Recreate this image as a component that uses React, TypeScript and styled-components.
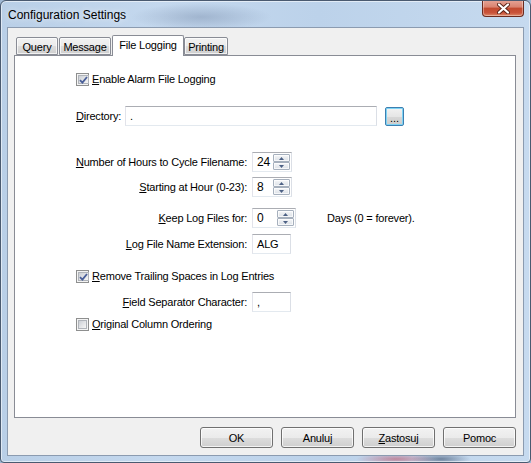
import React from "react";
import styled, { createGlobalStyle } from "styled-components";

const Global = createGlobalStyle`
  html, body { margin: 0; padding: 0; background: #9fb8d4; }
  body { font-family: "Liberation Sans", Arial, sans-serif; font-size: 11px; color: #000; }
  * { box-sizing: border-box; }
`;

const Window = styled.div`
  width: 531px;
  height: 463px;
  border: 1px solid #4a5a70;
  border-radius: 6px 6px 4px 4px;
  overflow: hidden;
  display: flex;
  flex-direction: column;
  background:
    radial-gradient(ellipse 70px 14px at 200px 16px, rgba(120,140,170,0.45), rgba(120,140,170,0) 100%),
    radial-gradient(ellipse 40px 6px at 395px 458px, rgba(190,60,80,0.5), rgba(190,60,80,0) 100%),
    radial-gradient(ellipse 30px 6px at 440px 458px, rgba(30,50,80,0.5), rgba(30,50,80,0) 100%),
    linear-gradient(90deg, #b9cfe7 0%, #c4d8ee 30%, #bcd2ea 60%, #c6daef 100%);
  box-shadow: inset 0 0 0 1px rgba(255,255,255,0.55);
`;

const TitleBar = styled.div`
  height: 26px;
  display: flex;
  align-items: flex-start;
  justify-content: space-between;
  padding: 0 6px 0 7px;
`;

const Title = styled.div`
  font-size: 12px;
  line-height: 12px;
  margin-top: 8px;
  color: #000;
  text-shadow: 0 0 6px rgba(255,255,255,0.9);
`;

const CloseButton = styled.div`
  width: 42px;
  height: 17px;
  margin-top: -1px;
  border: 1px solid #6b2a1e;
  border-top: none;
  border-radius: 0 0 4px 4px;
  background: linear-gradient(180deg, #e6a597 0%, #d9826f 45%, #c24a2f 50%, #c9533a 80%, #de8a6a 100%);
  box-shadow: inset 0 0 0 1px rgba(255,255,255,0.35);
  display: flex;
  align-items: center;
  justify-content: center;
`;

const Body = styled.div`
  flex: 1;
  display: flex;
  padding: 0 6px 6px 6px;
`;

const Client = styled.div`
  flex: 1;
  border: 1px solid #8b9bb0;
  background: #f0f0f0;
  padding: 7px 7px 7px 6px;
  display: flex;
  flex-direction: column;
`;

const TabStrip = styled.div`
  height: 20px;
  display: flex;
  align-items: flex-end;
  padding-left: 2px;
`;

const Tab = styled.div<{ $w: number; $active?: boolean; $gap?: number }>`
  width: ${(p) => p.$w}px;
  margin-right: ${(p) => p.$gap ?? 0}px;
  height: ${(p) => (p.$active ? 21 : 18)}px;
  margin-bottom: ${(p) => (p.$active ? -1 : 0)}px;
  position: relative;
  z-index: ${(p) => (p.$active ? 2 : 1)};
  border: 1px solid #898c95;
  border-bottom: ${(p) => (p.$active ? "none" : "1px solid #898c95")};
  border-radius: 2px 2px 0 0;
  background: ${(p) =>
    p.$active ? "#ffffff" : "linear-gradient(180deg, #f2f2f2 0%, #ebebeb 50%, #dddddd 51%, #cfcfcf 100%)"};
  box-shadow: ${(p) => (p.$active ? "none" : "inset 0 0 0 1px rgba(255,255,255,0.7)")};
  display: flex;
  justify-content: center;
  align-items: ${(p) => (p.$active ? "flex-start" : "center")};
  padding-top: ${(p) => (p.$active ? 3 : 1)}px;
  font-size: 11px;
  letter-spacing: -0.2px;
  white-space: nowrap;
`;

const Panel = styled.div`
  height: 363px;
  border: 1px solid #898c95;
  background: #ffffff;
  padding: 17px 0 0 61px;
  display: flex;
  flex-direction: column;
`;

const Row = styled.div<{ $mt: number }>`
  display: flex;
  align-items: center;
  margin-top: ${(p) => p.$mt}px;
  letter-spacing: -0.2px;
  white-space: nowrap;
`;

const CheckBox = styled.span`
  width: 13px;
  height: 13px;
  border: 1px solid #8e8f8f;
  background: #f4f4f4;
  padding: 1px;
  display: inline-flex;
  margin-right: 3px;
  flex: none;
  & > span {
    flex: 1;
    border: 1px solid #b0b4ba;
    background: linear-gradient(135deg, #cbcfd5 0%, #e6e7e9 60%, #f6f6f6 100%);
    display: flex;
    align-items: center;
    justify-content: center;
  }
`;

const CheckLabel = styled.span`
  line-height: 13px;
`;

const U = styled.span`
  text-decoration: underline;
`;

const DirLabel = styled.span`
  width: 49px;
  flex: none;
`;

const TextBox = styled.div<{ $w: number }>`
  width: ${(p) => p.$w}px;
  flex: none;
  height: 20px;
  border: 1px solid;
  border-color: #abadb3 #dbdfe6 #e3e9ef #e2e3ea;
  background: #fff;
  padding: 0 4px;
  display: flex;
  align-items: center;
  font-size: 11px;
`;

const BrowseButton = styled.div`
  width: 19px;
  height: 19px;
  margin-left: 8px;
  border: 1px solid #3c7fb1;
  border-radius: 2px;
  background: linear-gradient(180deg, #f2f2f2 0%, #e6e6e6 50%, #d8d8d8 51%, #cdcdcd 100%);
  box-shadow: inset 0 0 0 1px #7fd4f5;
  display: flex;
  align-items: flex-end;
  justify-content: center;
  font-size: 11px;
  line-height: 13px;
  letter-spacing: 0;
`;

const FieldLabel = styled.span`
  width: 171px;
  flex: none;
  margin-right: 5px;
  display: flex;
  justify-content: flex-end;
  white-space: nowrap;
`;

const SpinBox = styled.div<{ $w: number }>`
  width: ${(p) => p.$w}px;
  flex: none;
  height: 20px;
  border: 1px solid;
  border-color: #abadb3 #dbdfe6 #e3e9ef #e2e3ea;
  background: #fff;
  padding: 1px 1px 1px 0;
  display: flex;
`;

const SpinValue = styled.div`
  flex: 1;
  padding-left: 4px;
  display: flex;
  align-items: center;
  font-size: 12px;
`;

const SpinButtons = styled.div`
  width: 17px;
  display: flex;
  flex-direction: column;
`;

const SpinButton = styled.div`
  flex: 1;
  border: 1px solid #a6b0bd;
  border-radius: 1px;
  background: linear-gradient(180deg, #f6f7f9 0%, #e8ebef 50%, #dde2e8 100%);
  box-shadow: inset 0 0 0 1px rgba(255,255,255,0.7);
  display: flex;
  align-items: center;
  justify-content: center;
`;

const DaysText = styled.span`
  margin-left: 31px;
`;

const ButtonRow = styled.div`
  margin-top: 9px;
  display: flex;
  justify-content: flex-end;
  gap: 8px;
`;

const DlgButton = styled.div`
  width: 73px;
  height: 21px;
  border: 1px solid #707070;
  border-radius: 3px;
  background: linear-gradient(180deg, #f2f2f2 0%, #ebebeb 50%, #dddddd 51%, #cfcfcf 100%);
  box-shadow: inset 0 0 0 1px rgba(255,255,255,0.75);
  display: flex;
  align-items: center;
  justify-content: center;
  font-size: 11px;
  letter-spacing: -0.2px;
`;

const Check = ({ checked }: { checked?: boolean }) => (
  <CheckBox>
    <span>
      {checked && (
        <svg width="9" height="8" viewBox="0 0 9 8">
          <path d="M1 4.2 L3.4 6.6 L8 1" fill="none" stroke="#4a5f99" strokeWidth="1.8" />
        </svg>
      )}
    </span>
  </CheckBox>
);

const Arrow = ({ up }: { up?: boolean }) => (
  <svg width="5" height="3" viewBox="0 0 5 3">
    <path d={up ? "M0 3 L2.5 0 L5 3 Z" : "M0 0 L5 0 L2.5 3 Z"} fill="#4d6185" />
  </svg>
);

const Spinner = ({ value, w }: { value: string; w: number }) => (
  <SpinBox $w={w}>
    <SpinValue>{value}</SpinValue>
    <SpinButtons>
      <SpinButton>
        <Arrow up />
      </SpinButton>
      <SpinButton>
        <Arrow />
      </SpinButton>
    </SpinButtons>
  </SpinBox>
);

export default function App() {
  return (
    <>
      <Global />
      <Window>
        <TitleBar>
          <Title>Configuration Settings</Title>
          <CloseButton>
            <svg width="13" height="11" viewBox="0 0 13 11">
              <path
                d="M2 1.5 L11 9.5 M11 1.5 L2 9.5"
                stroke="#5a2418"
                strokeWidth="4"
                strokeLinecap="round"
              />
              <path d="M2 1.5 L11 9.5 M11 1.5 L2 9.5" stroke="#ffffff" strokeWidth="2.2" strokeLinecap="round" />
            </svg>
          </CloseButton>
        </TitleBar>
        <Body>
          <Client>
            <TabStrip>
              <Tab $w={42} $gap={1}>Query</Tab>
              <Tab $w={52} $gap={1}>Message</Tab>
              <Tab $w={72} $active>
                File Logging
              </Tab>
              <Tab $w={44}>Printing</Tab>
            </TabStrip>
            <Panel>
              <Row $mt={0}>
                <Check checked />
                <CheckLabel>
                  <U>E</U>nable Alarm File Logging
                </CheckLabel>
              </Row>
              <Row $mt={20}>
                <DirLabel>
                  <U>D</U>irectory:
                </DirLabel>
                <TextBox $w={252}>.</TextBox>
                <BrowseButton>...</BrowseButton>
              </Row>
              <Row $mt={26}>
                <FieldLabel>
                  <span>
                    <U>N</U>umber of Hours to Cycle Filename:
                  </span>
                </FieldLabel>
                <Spinner value="24" w={40} />
              </Row>
              <Row $mt={5}>
                <FieldLabel>
                  <span>
                    <U>S</U>tarting at Hour (0-23):
                  </span>
                </FieldLabel>
                <Spinner value="8" w={40} />
              </Row>
              <Row $mt={11}>
                <FieldLabel>
                  <span>
                    <U>K</U>eep Log Files for:
                  </span>
                </FieldLabel>
                <Spinner value="0" w={44} />
                <DaysText>Days (0 = forever).</DaysText>
              </Row>
              <Row $mt={6}>
                <FieldLabel>
                  <span>
                    <U>L</U>og File Name Extension:
                  </span>
                </FieldLabel>
                <TextBox $w={39}>ALG</TextBox>
              </Row>
              <Row $mt={16}>
                <Check checked />
                <CheckLabel>
                  <U>R</U>emove Trailing Spaces in Log Entries
                </CheckLabel>
              </Row>
              <Row $mt={9}>
                <FieldLabel>
                  <span>
                    <U>F</U>ield Separator Character:
                  </span>
                </FieldLabel>
                <TextBox $w={39}>,</TextBox>
              </Row>
              <Row $mt={6}>
                <Check />
                <CheckLabel>
                  <U>O</U>riginal Column Ordering
                </CheckLabel>
              </Row>
            </Panel>
            <ButtonRow>
              <DlgButton>OK</DlgButton>
              <DlgButton>Anuluj</DlgButton>
              <DlgButton>
                <span>
                  <U>Z</U>astosuj
                </span>
              </DlgButton>
              <DlgButton>Pomoc</DlgButton>
            </ButtonRow>
          </Client>
        </Body>
      </Window>
    </>
  );
}
